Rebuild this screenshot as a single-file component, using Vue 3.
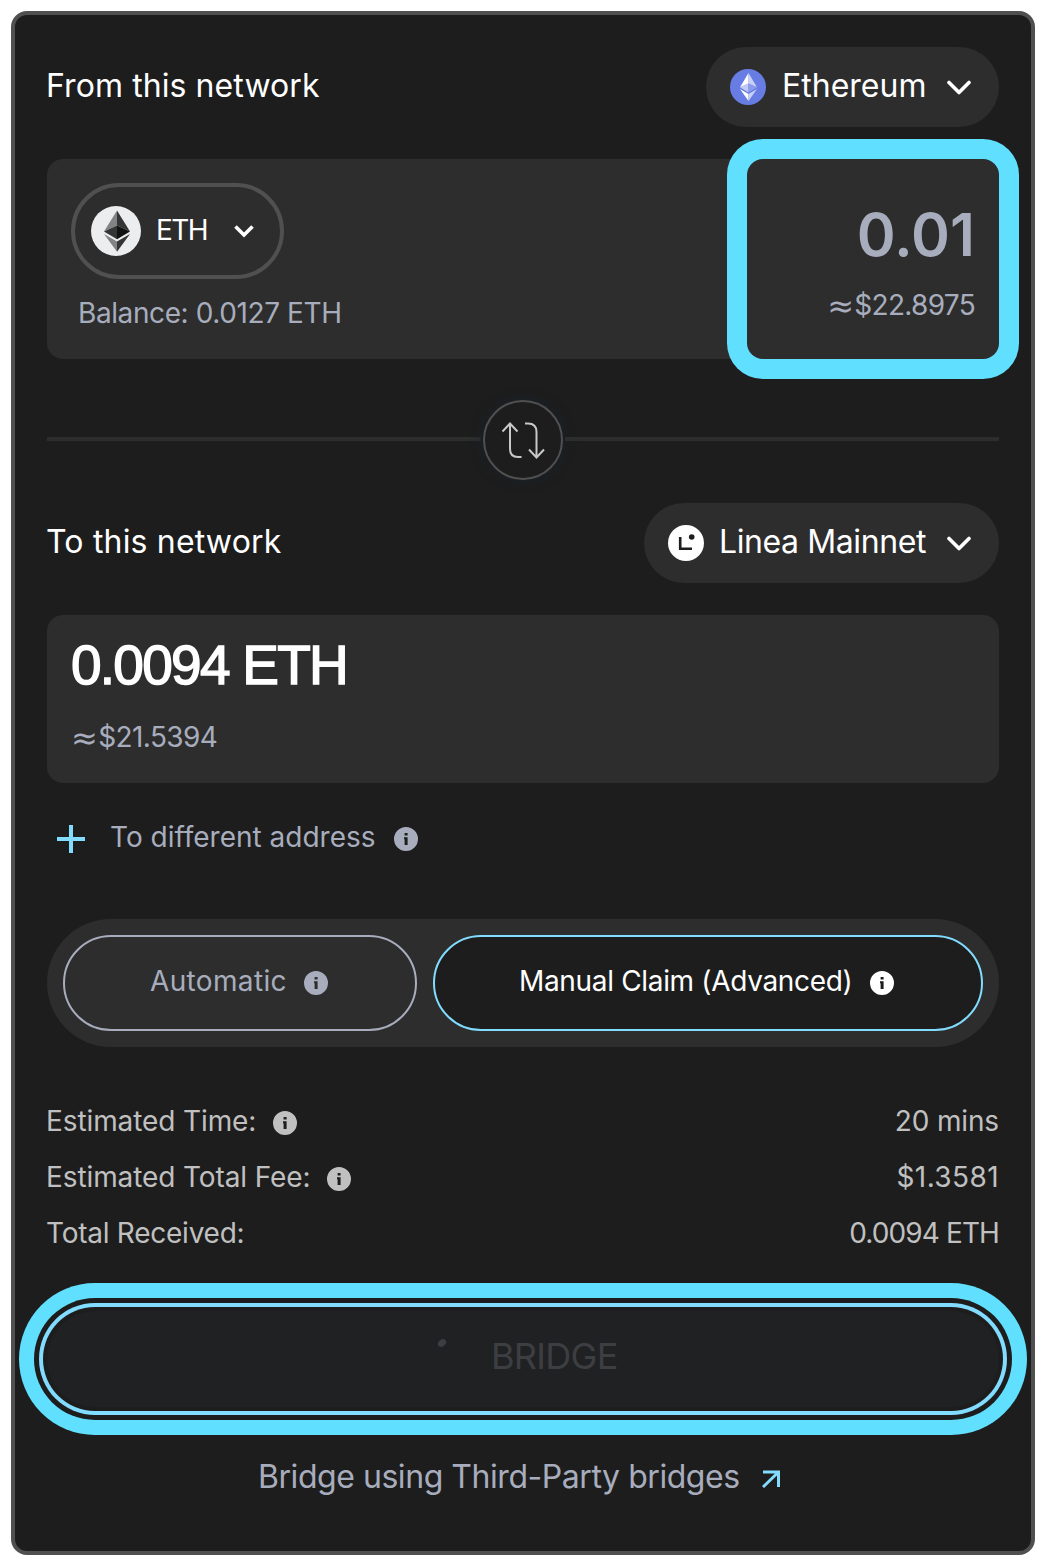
<script setup>
import { h } from 'vue'

const fees = [
  { label: 'Estimated Time:', value: '20 mins', info: true, key: 'time' },
  { label: 'Estimated Total Fee:', value: '$1.3581', info: true, key: 'total-fee' },
  { label: 'Total Received:', value: '0.0094 ETH', info: false, key: 'received' },
]

const InfoIcon = () =>
  h('svg', { width: 24, height: 24, viewBox: '0 0 24 24' }, [
    h('path', {
      fill: 'currentColor',
      'fill-rule': 'evenodd',
      d: 'M12 0a12 12 0 1 0 0 24a12 12 0 0 0 0-24zM10.6 6h3v2.6h-3zM10 10.2h3.6v7.8h-3v-5.7H10z',
    }),
  ])

const Chevron = () =>
  h('svg', { width: 24, height: 16, viewBox: '0 0 24 16' }, [
    h('path', {
      d: 'M2 3.500l10 10L22 3.500',
      fill: 'none',
      stroke: '#fff',
      'stroke-width': 3.6,
      'stroke-linecap': 'round',
      'stroke-linejoin': 'round',
    }),
  ])
</script>

<template>
  <main class="card">
    <div class="network">
      <span class="title">From this network</span>
      <button class="pill pill-eth">
        <svg class="pill-icon" viewBox="0 0 36 36">
          <circle cx="18" cy="18" r="18" fill="#687de3" />
          <path d="M18.500 4L10 18.300l8.500-3.800z" fill="#fff" />
          <path d="M18.500 4L27 18.300l-8.500-3.800z" fill="#c9d0f6" />
          <path d="M10 18.300l8.500-3.800v8.900z" fill="#c2cbf5" />
          <path d="M27 18.300l-8.500-3.800v8.900z" fill="#8a9ceb" />
          <path d="M10 20l8.500 5v7z" fill="#fff" />
          <path d="M27 20l-8.500 5v7z" fill="#c9d0f6" />
        </svg>
        <span class="pill-text">Ethereum</span>
        <Chevron />
      </button>
    </div>

    <section class="panel from-panel">
      <div class="asset">
        <button class="token">
          <svg width="50" height="50" viewBox="0 0 50 50">
            <circle cx="25" cy="25" r="25" fill="#ecedee" />
            <path d="M26 4.500L13 25.600l13-6z" fill="#828384" />
            <path d="M26 4.500L39 25.600l-13-6z" fill="#343535" />
            <path d="M13 25.600l13-6v13.700z" fill="#343535" />
            <path d="M39 25.600l-13-6v13.700z" fill="#101111" />
            <path d="M13 28l13 7.500v10.300z" fill="#828384" />
            <path d="M39 28l-13 7.500v10.300z" fill="#343535" />
          </svg>
          <span class="token-text">ETH</span>
          <svg width="20" height="14" viewBox="0 0 20 14">
            <path d="M1.500 2.500l8.500 8.500l8.500-8.500" fill="none" stroke="#fff" stroke-width="3.600" />
          </svg>
        </button>
        <span class="balance">Balance: 0.0127 ETH</span>
      </div>
      <div class="amount">
        <span class="amount-value">0.01</span>
        <span class="fiat"><span class="approx">≈</span>$22.8975</span>
      </div>
    </section>

    <div class="divider">
      <i class="line"></i>
      <button class="swap">
        <svg width="44" height="38" viewBox="0 0 44 38" fill="none" stroke="#c8c8c8" stroke-width="2">
          <path d="M1.500 10.500L9 2.500l7.500 8M9 3v25q0 8 8 8h3.500" />
          <path d="M24 2.500h3q8.500 0 8.500 8.500v25.500M28 28.500l7.500 8l7.500-8" />
        </svg>
      </button>
      <i class="line"></i>
    </div>

    <div class="network">
      <span class="title to-title">To this network</span>
      <button class="pill pill-linea">
        <svg class="pill-icon" viewBox="0 0 36 36">
          <circle cx="18" cy="18" r="18" fill="#fff" />
          <path d="M12.200 12v11.800h11.800" fill="none" stroke="#1d1d1d" stroke-width="2.600" />
          <circle cx="23.700" cy="12" r="2.800" fill="#1d1d1d" />
        </svg>
        <span class="pill-text">Linea Mainnet</span>
        <Chevron />
      </button>
    </div>

    <section class="panel to-panel">
      <span class="receive">0.0094 ETH</span>
      <span class="fiat"><span class="approx">≈</span>$21.5394</span>
    </section>

    <div class="address">
      <svg width="28" height="28" viewBox="0 0 28 28">
        <path d="M14 0v28M0 14h28" stroke="#82dcff" stroke-width="4" />
      </svg>
      <span class="address-text">To different address</span>
      <InfoIcon />
    </div>

    <div class="modes">
      <button class="mode auto">
        <span class="mode-text">Automatic</span>
        <InfoIcon />
      </button>
      <button class="mode manual">
        <span class="mode-text">Manual Claim (Advanced)</span>
        <InfoIcon />
      </button>
    </div>

    <dl class="fees">
      <div v-for="f in fees" :key="f.key" class="fee" :class="f.key">
        <dt><span class="fee-label">{{ f.label }}</span><InfoIcon v-if="f.info" /></dt>
        <dd>{{ f.value }}</dd>
      </div>
    </dl>

    <button class="bridge">
      <svg width="10" height="10" viewBox="0 0 10 10">
        <ellipse cx="5" cy="5" rx="4.400" ry="3.300" transform="rotate(-35 5 5)" fill="#3c3e42" />
      </svg>
      <span class="bridge-text">BRIDGE</span>
    </button>

    <a class="third-party">
      <span class="third-text">Bridge using Third-Party bridges</span>
      <svg width="18" height="18" viewBox="0 0 18 18">
        <path d="M1 2h15.500v15M16 2.500L1 17" fill="none" stroke="#82dcff" stroke-width="3" />
      </svg>
    </a>
  </main>
</template>

<style>
body {
  background: #fff;
}
</style>

<style scoped>
* {
  box-sizing: border-box;
}
.card {
  width: 1024px;
  height: 1544px;
  margin: 11px 0 0 11px;
  padding: 32px;
  border: 4px solid #505050;
  border-radius: 16px;
  background: #1d1d1d;
  color: #fff;
  font-family: Inter, "Liberation Sans", sans-serif;
  font-size: 28px;
  line-height: 40px;
  white-space: nowrap;
}
button {
  display: flex;
  align-items: center;
  margin: 0;
  padding: 0;
  border: 0;
  background: none;
  color: inherit;
  font: inherit;
}
svg {
  display: block;
  flex: none;
}
.network {
  display: flex;
  justify-content: space-between;
  align-items: center;
  height: 80px;
}
.title,
.pill-text {
  padding-bottom: 2px;
  font-size: 32px;
}
.title {
  margin-left: -1px;
  letter-spacing: 0.09px;
}
.to-title {
  letter-spacing: 0.18px;
}
.pill {
  height: 80px;
  padding: 0 28px 0 24px;
  border-radius: 40px;
  background: #2d2d2d;
}
.pill-eth {
  width: 293px;
}
.pill-linea {
  width: 355px;
}
.pill-icon {
  width: 36px;
  height: 36px;
}
.pill-text {
  flex: 1;
  margin-left: 16px;
  text-align: left;
}
.pill-linea .pill-text {
  margin-left: 15px;
  letter-spacing: -0.4px;
}
.panel {
  border-radius: 16px;
  background: #2d2d2d;
}
.from-panel {
  display: flex;
  justify-content: space-between;
  height: 200px;
  margin-top: 32px;
}
.asset {
  display: flex;
  flex-direction: column;
  padding: 24px 0 0 24px;
}
.token {
  width: 213px;
  height: 96px;
  padding: 0 26px 0 16px;
  border: 4px solid #505050;
  border-radius: 48px;
}
.token-text {
  flex: 1;
  margin-left: 15px;
  padding-bottom: 2px;
  letter-spacing: -1.6px;
  text-align: left;
}
.balance {
  margin: 14px 0 0 7px;
  color: #a8adbd;
  letter-spacing: -0.4px;
}
.amount {
  display: flex;
  flex-direction: column;
  align-items: flex-end;
  width: 252px;
  padding: 40px 24px 0 0;
  border-radius: 16px;
  color: #a8adbd;
  box-shadow: 0 0 0 20px #61dfff;
}
.amount-value {
  font-size: 59px;
  font-weight: 600;
  line-height: 72px;
}
.amount .fiat {
  margin-top: 14px;
}
.fiat {
  color: #a8adbd;
  letter-spacing: -0.7px;
}
.approx {
  margin-right: 1px;
  font-family: "DejaVu Sans", sans-serif;
  font-size: 32px;
  line-height: 0;
  vertical-align: -2px;
}
.divider {
  display: flex;
  align-items: center;
  gap: 2px;
  height: 80px;
  margin: 41px 0 23px;
}
.line {
  flex: 1;
  height: 4px;
  margin-top: -2px;
  background: #2d2d2d;
}
.swap {
  justify-content: center;
  width: 80px;
  height: 80px;
  border: 2px solid #505050;
  border-radius: 50%;
  background: #1d1d1d;
  box-shadow: 0 0 12px #19222b;
}
.to-panel {
  display: flex;
  flex-direction: column;
  height: 168px;
  margin-top: 32px;
  padding: 14px 24px 0;
}
.receive {
  font-family: "Liberation Sans", sans-serif;
  font-size: 55px;
  letter-spacing: -1.75px;
  line-height: 73px;
  -webkit-text-stroke: 1.4px #fff;
}
.to-panel .fiat {
  margin: 15px 0 0;
  letter-spacing: -0.6px;
}
.address {
  display: flex;
  align-items: center;
  height: 56px;
  margin-top: 28px;
  padding-left: 10px;
  color: #a8adbd;
}
.address-text {
  width: 284px;
  margin-left: 25px;
  padding-bottom: 4px;
}
.modes {
  display: flex;
  gap: 16px;
  height: 128px;
  margin-top: 52px;
  padding: 16px;
  border-radius: 64px;
  background: #2d2d2d;
}
.mode {
  height: 96px;
  border: 2px solid #a8adbd;
  border-radius: 48px;
  color: #a8adbd;
}
.auto {
  width: 354px;
  padding-left: 85px;
}
.manual {
  width: 550px;
  padding-left: 84px;
  border-color: #82dcff;
  background: #1d1d1d;
  color: #fff;
}
.mode-text {
  width: 154px;
  padding-bottom: 4px;
  letter-spacing: 0.35px;
  text-align: left;
}
.manual .mode-text {
  width: 351px;
  letter-spacing: -0.33px;
}
.fees {
  margin: 48px 0 0;
  color: #c0c0c0;
}
.fee {
  display: flex;
  justify-content: space-between;
  height: 56px;
}
.fee dt {
  display: flex;
  align-items: center;
  height: 56px;
}
.fee dd {
  margin: 0;
  line-height: 53px;
}
.fee-label {
  margin-left: -1px;
  padding-bottom: 4px;
  letter-spacing: -0.1px;
}
.time .fee-label {
  width: 227px;
}
.time dd {
  letter-spacing: -0.15px;
}
.total-fee .fee-label {
  width: 281px;
}
.total-fee dd {
  letter-spacing: 0.4px;
}
.received .fee-label {
  letter-spacing: -0.25px;
}
.received dd {
  letter-spacing: -0.9px;
}
.bridge {
  width: 952px;
  height: 96px;
  margin-top: 48px;
  padding-left: 390px;
  border-radius: 48px;
  background: #202123;
  color: #3c3e42;
  font-size: 36px;
  box-shadow: 0 0 0 4px #1d1d1d, 0 0 0 8px #82dcff, 0 0 0 13px #1d1d1d, 0 0 0 28px #61dfff;
}
.bridge svg {
  margin-bottom: 32px;
}
.bridge-text {
  margin-left: 44px;
  padding-bottom: 6px;
  letter-spacing: -0.7px;
}
.third-party {
  display: flex;
  align-items: center;
  height: 48px;
  margin-top: 48px;
  padding-left: 211px;
  color: #a8adbd;
  font-size: 32px;
}
.third-text {
  width: 504px;
  padding-bottom: 4px;
  letter-spacing: -0.45px;
}
</style>
